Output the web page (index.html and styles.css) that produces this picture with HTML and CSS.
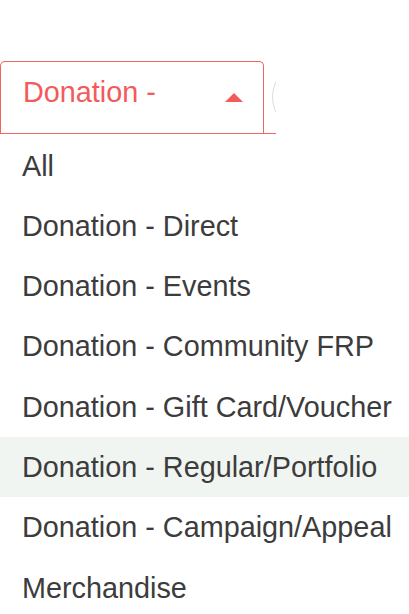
FILE: index.html
```html
<!DOCTYPE html>
<html>
  <head>
    <meta charset="UTF-8">
    <title>Category filter</title>
    <link rel="stylesheet" href="styles.css">
  </head>
  <body>

    <!-- Filter bar -->
    <div class="filter-bar">
      <div class="select-box">
        <span class="select-value">Donation -</span>
        <span class="select-caret"></span>
      </div>
      <div class="round-btn"></div>
    </div>

    <ul class="options">
      <li>All</li>
      <li>Donation - Direct</li>
      <li>Donation - Events</li>
      <li>Donation - Community FRP</li>
      <li>Donation - Gift Card/Voucher</li>
      <li class="hover">Donation - Regular/Portfolio</li>
      <li>Donation - Campaign/Appeal</li>
      <li>Merchandise</li>
    </ul>

  </body>
</html>
```

FILE: styles.css
```css
body {
  font-family: "Liberation Sans", Arial, sans-serif;
  background-color: #fff;
  margin: 0;
  padding: 0;
  overflow: hidden;
}
.filter-bar {
  display: flex;
  gap: 8px;
  width: 276px;
  margin-top: 61px;
  overflow: hidden;
  border-bottom: 1px solid #ee6461;
}
.select-box {
  display: flex;
  align-items: center;
  justify-content: space-between;
  flex-shrink: 0;
  box-sizing: border-box;
  width: 264px;
  height: 72px;
  padding: 0 20px 4px 22px;
  border: 1px solid #ee6461;
  border-bottom: none;
  border-radius: 5px 5px 0 0;
}
.select-value {
  font-size: 28.8px;
  color: #f25b5b;
  margin-bottom: 6px;
}
.select-caret {
  width: 0;
  height: 0;
  margin-top: 4px;
  border-left: 9px solid transparent;
  border-right: 9px solid transparent;
  border-bottom: 9px solid #f25b5b;
}
.round-btn {
  flex-shrink: 0;
  box-sizing: border-box;
  width: 72px;
  height: 72px;
  border: 1px solid #dcdcdc;
  border-radius: 50%;
}
.options {
  list-style-type: none;
  margin: 0;
  padding: 1.5px 0 0;
}
.options li {
  padding-left: 22px;
  font-size: 28.8px;
  line-height: 60.3px;
  color: #3c3c3c;
  white-space: nowrap;
}
.options li.hover {
  background-color: #f1f5f1;
}
```
